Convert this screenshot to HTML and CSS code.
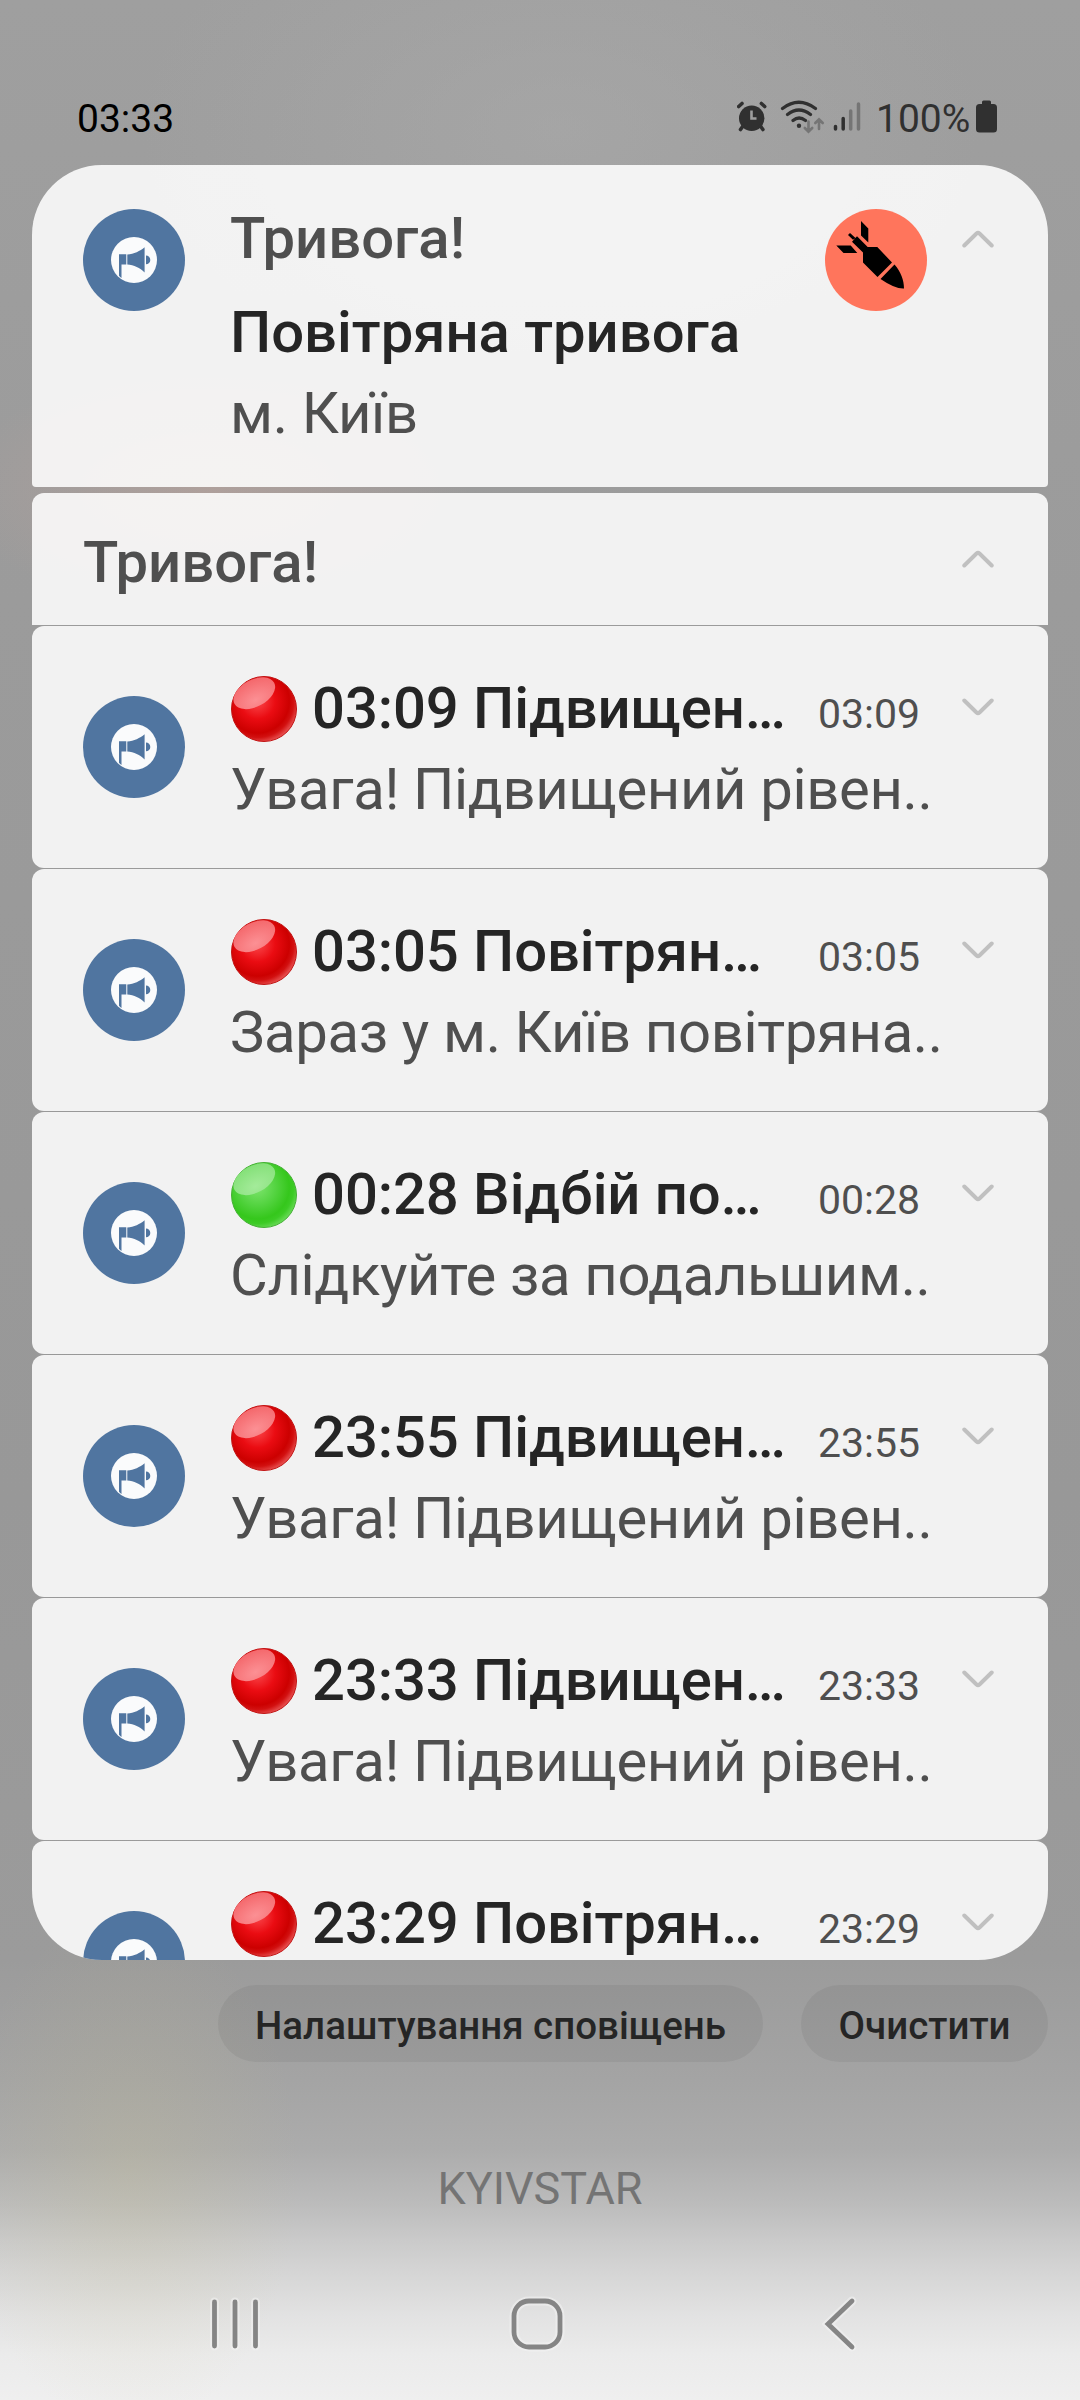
FILE: index.html
```html
<!DOCTYPE html>
<html lang="uk">
<head>
<meta charset="utf-8">
<title>Сповіщення</title>
<link rel="stylesheet" href="styles.css">
</head>
<body>
<svg class="defs" width="0" height="0" aria-hidden="true">
  <defs>
    <radialGradient id="redBody" cx=".4" cy=".38" r=".68"><stop offset="0" stop-color="#fb484c"/><stop offset=".4" stop-color="#ea0c12"/><stop offset=".72" stop-color="#cc0000"/><stop offset=".82" stop-color="#d21010"/><stop offset="1" stop-color="#f06868"/></radialGradient>
    <radialGradient id="redShine" cx=".45" cy=".75" r=".75"><stop offset="0" stop-color="#fc9094"/><stop offset="1" stop-color="#f4686c"/></radialGradient>
    <radialGradient id="greenBody" cx=".4" cy=".38" r=".68"><stop offset="0" stop-color="#7ee46e"/><stop offset=".4" stop-color="#55d442"/><stop offset=".72" stop-color="#35c71c"/><stop offset=".82" stop-color="#3ccb25"/><stop offset="1" stop-color="#78df68"/></radialGradient>
    <radialGradient id="greenShine" cx=".45" cy=".75" r=".75"><stop offset="0" stop-color="#a4eb9a"/><stop offset="1" stop-color="#84e078"/></radialGradient>
    <symbol id="app" viewBox="0 0 102 102">
      <circle cx="51" cy="51" r="51" fill="#5075a0"/>
      <circle cx="51" cy="51" r="23" fill="#fafbfc"/>
      <path d="M36 45.300h7.300v10.300h-4.800v13.400q-1.400-.8-2.500-2.300zM44.300 45.400C51 45 57 42 61.600 38.200v25.300C57 59 51 56.200 44.300 55.600zM63 46.600a4 4 0 0 1 0 8.600z" fill="#5075a0"/>
    </symbol>
    <symbol id="red" viewBox="0 0 66 66">
      <circle cx="33" cy="33" r="32.500" fill="url(#redBody)" stroke="#c21414"/>
      <ellipse cx="23.300" cy="17.200" rx="22.500" ry="13.500" transform="rotate(-28 23.300 17.200)" fill="url(#redShine)"/>
    </symbol>
    <symbol id="green" viewBox="0 0 66 66">
      <circle cx="33" cy="33" r="32.500" fill="url(#greenBody)" stroke="#45b035"/>
      <ellipse cx="23.300" cy="17.200" rx="22.500" ry="13.500" transform="rotate(-28 23.300 17.200)" fill="url(#greenShine)"/>
    </symbol>
    <symbol id="chevron" viewBox="0 0 32 18"><path d="M2.300 2.500 14.500 14.500q1.500 1.300 3 0L29.700 2.500" fill="none" stroke="#c0c0c0" stroke-width="4" stroke-linecap="round"/></symbol>
  </defs>
</svg>
<div class="screen">
  <header class="status">
    <span class="clock">03:33</span>
    <svg class="status-icons" viewBox="0 0 126 34" width="126" height="34">
      <g fill="#303030" stroke="#303030" stroke-linecap="round">
        <circle cx="14.700" cy="18.300" r="12.700" stroke="none"/>
        <path d="M1.700 6.500 5 3.500M27.700 6.500 24.400 3.500M6 26 3.500 29.500M23.400 26l2.500 3.500" stroke-width="3.600" fill="none"/>
        <path d="M14.500 10.500v8h5" fill="none" stroke="#9e9e9e" stroke-width="2.600" stroke-linecap="butt"/>
        <path d="M45.500 8.500q16.200-12.500 33 0M50.500 14.500q11.400-9 23 0M56 20.500q6-5 12.500 0" fill="none" stroke-width="3.200"/>
        <circle cx="62" cy="25.800" r="2.200" stroke="none"/>
        <path d="M98.500 26.500V29M106.200 18.500V29" stroke-width="3.500"/>
      </g>
      <path d="M71.500 21.500v10M67.800 28l3.700 3.700 3.700-3.700M82 29v-9.500M78.300 23 82 19.300 85.700 23" fill="none" stroke="#757575" stroke-width="2.600" stroke-linecap="round"/>
      <path d="M113.700 11V29M121.500 4V29" stroke="#757575" stroke-width="3.500" stroke-linecap="round"/>
    </svg>
    <span class="percent">100%</span>
    <svg class="battery" viewBox="0 0 21 33" width="21" height="33"><path d="M6 4V2Q6 .5 7.500.500h6q1.500 0 1.500 1.500v2h2.500q3.500 0 3.500 3.500v21.500q0 3.500-3.500 3.500h-14Q0 32.500 0 29V7.500Q0 4 3.500 4z" fill="#303030"/></svg>
  </header>

  <main class="shade">
    <section class="card current">
      <svg class="app"><use href="#app"/></svg>
      <div class="current-text">
        <div class="label">Тривога!</div>
        <div class="title">Повітряна тривога</div>
        <div class="body">м. Київ</div>
      </div>
      <svg class="threat" viewBox="0 0 102 102">
        <circle cx="51" cy="51" r="51" fill="#ff755c"/>
        <path d="M36 12l7.300 7.500v14L36 26.500zM11.300 36.500h14.400l6.600 7.500H18.500zM25 24l5.500 5-2.500 1.800-5-4.700zM32 27.300 42.700 38h9.600L67 53.500 52.500 68 38 53.500V43.500L27 32.800zM69.500 55.500C76 63 79 71 79 79.500Q70 80 55.500 70z" fill="#000"/>
      </svg>
      <svg class="chevron up"><use href="#chevron"/></svg>
    </section>
    <section class="card group-head">
      <div class="label">Тривога!</div>
      <svg class="chevron up"><use href="#chevron"/></svg>
    </section>
    <article class="card item">
      <svg class="app"><use href="#app"/></svg>
      <div class="item-text">
        <div class="row"><svg class="dot"><use href="#red"/></svg><span class="title">03:09 Підвищен…</span><time>03:09</time></div>
        <div class="body">Увага! Підвищений рівен..</div>
      </div>
      <svg class="chevron"><use href="#chevron"/></svg>
    </article>
    <article class="card item">
      <svg class="app"><use href="#app"/></svg>
      <div class="item-text">
        <div class="row"><svg class="dot"><use href="#red"/></svg><span class="title">03:05 Повітрян…</span><time>03:05</time></div>
        <div class="body">Зараз у м. Київ повітряна..</div>
      </div>
      <svg class="chevron"><use href="#chevron"/></svg>
    </article>
    <article class="card item">
      <svg class="app"><use href="#app"/></svg>
      <div class="item-text">
        <div class="row"><svg class="dot"><use href="#green"/></svg><span class="title">00:28 Відбій по…</span><time>00:28</time></div>
        <div class="body">Слідкуйте за подальшим..</div>
      </div>
      <svg class="chevron"><use href="#chevron"/></svg>
    </article>
    <article class="card item">
      <svg class="app"><use href="#app"/></svg>
      <div class="item-text">
        <div class="row"><svg class="dot"><use href="#red"/></svg><span class="title">23:55 Підвищен…</span><time>23:55</time></div>
        <div class="body">Увага! Підвищений рівен..</div>
      </div>
      <svg class="chevron"><use href="#chevron"/></svg>
    </article>
    <article class="card item">
      <svg class="app"><use href="#app"/></svg>
      <div class="item-text">
        <div class="row"><svg class="dot"><use href="#red"/></svg><span class="title">23:33 Підвищен…</span><time>23:33</time></div>
        <div class="body">Увага! Підвищений рівен..</div>
      </div>
      <svg class="chevron"><use href="#chevron"/></svg>
    </article>
    <article class="card item last">
      <svg class="app"><use href="#app"/></svg>
      <div class="item-text">
        <div class="row"><svg class="dot"><use href="#red"/></svg><span class="title">23:29 Повітрян…</span><time>23:29</time></div>
      </div>
      <svg class="chevron"><use href="#chevron"/></svg>
    </article>
  </main>

  <div class="actions">
    <button class="pill settings">Налаштування сповіщень</button>
    <button class="pill clear">Очистити</button>
  </div>
  <div class="carrier">KYIVSTAR</div>
  <nav class="nav">
    <svg width="54" height="58" viewBox="0 0 54 58"><path class="halo" d="M6.500 7v44M27 7v44M47.500 7v44"/><path class="line" d="M6.500 7v44M27 7v44M47.500 7v44"/></svg>
    <svg width="58" height="58" viewBox="0 0 58 58"><rect class="halo" x="6" y="6" width="46" height="46" rx="15"/><rect class="line" x="6" y="6" width="46" height="46" rx="15"/></svg>
    <svg width="40" height="58" viewBox="0 0 40 58"><path class="halo" d="M32 6 8 29l24 23"/><path class="line" d="M32 6 8 29l24 23"/></svg>
  </nav>
</div>
</body>
</html>
```
FILE: styles.css
```css
* { box-sizing: border-box; }
body { margin: 0; font-family: Roboto, "Noto Sans", sans-serif; }
.defs { display: block; width: 0; height: 0; }
svg { display: block; flex: none; }

.screen {
  width: 1080px;
  height: 2400px;
  overflow: hidden;
  display: flex;
  flex-direction: column;
  background:
    radial-gradient(ellipse 170px 260px at 130px 2170px, rgba(200, 192, 140, .22), rgba(200, 192, 140, .1) 50%, transparent),
    radial-gradient(ellipse 260px 120px at 210px 490px, rgba(200, 165, 155, .42), transparent),
    radial-gradient(ellipse 420px 260px at 560px 130px, rgba(172, 172, 172, .5), transparent),
    linear-gradient(#9f9f9f 0, #9b9b9b 600px, #989898 1500px, #9b9b9b 1960px, #a4a4a4 2080px, #acacac 2150px, #bcbcbc 2205px, #cacaca 2240px, #d6d6d6 2275px, #e2e2e2 2315px, #ebebeb 2355px, #efefef 2400px);
}

.status {
  height: 165px;
  flex: none;
  display: flex;
  align-items: flex-start;
  padding: 100px 83px 0 77px;
  line-height: 38px;
}
.clock { font-size: 39px; color: #000; flex: 1; }
.status-icons { margin-right: 13px; }
.percent { width: 96px; font-size: 39px; color: #303030; white-space: nowrap; }
.battery { margin-left: 4px; }

.shade {
  height: 1795px;
  flex: none;
  margin: 0 32px;
  border-radius: 70px;
  overflow: hidden;
  display: flex;
  flex-direction: column;
  gap: 1px;
}
.card { flex: none; display: flex; background: rgba(255, 255, 255, .87); }
.label, .title, .body { font-size: 58px; line-height: 70px; white-space: nowrap; }
.label, .title { font-weight: 500; }
.label, .body { color: #4f4f4f; }
.title { color: #252525; }
.body { letter-spacing: -.35px; }
.app { width: 102px; height: 102px; margin-left: 51px; }
.chevron { width: 32px; height: 18px; }
.up { transform: scaleY(-1); }

.current { height: 322px; padding-top: 44px; border-radius: 0 0 4px 4px; margin-bottom: 5px; }
.current-text { width: 595px; margin: -6px 0 0 45px; }
.current .title { margin-top: 24px; }
.current .body { margin-top: 11px; }
.threat { width: 102px; height: 102px; }
.current .chevron { margin: 21px 0 0 35px; }

.group-head { height: 132px; padding: 34px 54px 0 51px; justify-content: space-between; border-radius: 12px 12px 0 0; }
.group-head .chevron { margin-top: 23px; }

.item { height: 242px; border-radius: 12px; padding-top: 47px; }
.item .app { margin-top: 23px; }
.item-text { width: 705px; margin-left: 46px; }
.row { display: flex; height: 70px; }
.row .title { flex: 1; letter-spacing: -.08px; }
.dot { width: 66px; height: 66px; margin: 3px 15px 0 0; }
time { width: 118px; font-size: 41px; line-height: 82px; color: #4f4f4f; }
.item .body { margin: 11px 0 0 -1px; }
.item .chevron { margin: 25px 0 0 26px; }

.actions { display: flex; justify-content: flex-end; gap: 38px; padding: 25px 32px 0 0; }
.pill { height: 77px; border: 0; border-radius: 38.500px; background: rgba(0, 0, 0, .055); font: 500 38.500px/77px Roboto, sans-serif; color: #252525; padding: 2px 0 0; white-space: nowrap; }
.settings { width: 545px; }
.clear { width: 247px; }

.carrier { margin-top: 97px; text-align: center; font-size: 45px; line-height: 60px; color: #747474; }
.nav { display: flex; padding: 76px 220px 0 208px; justify-content: space-between; }
.nav svg { overflow: visible; }
.nav svg:nth-child(2) { margin-right: 8px; }
.line, .halo { fill: none; stroke-linecap: round; stroke-linejoin: miter; }
.line { stroke: #858585; stroke-width: 4.800px; }
.halo { stroke: #f2f2f2; stroke-width: 9px; opacity: .55; }
```
